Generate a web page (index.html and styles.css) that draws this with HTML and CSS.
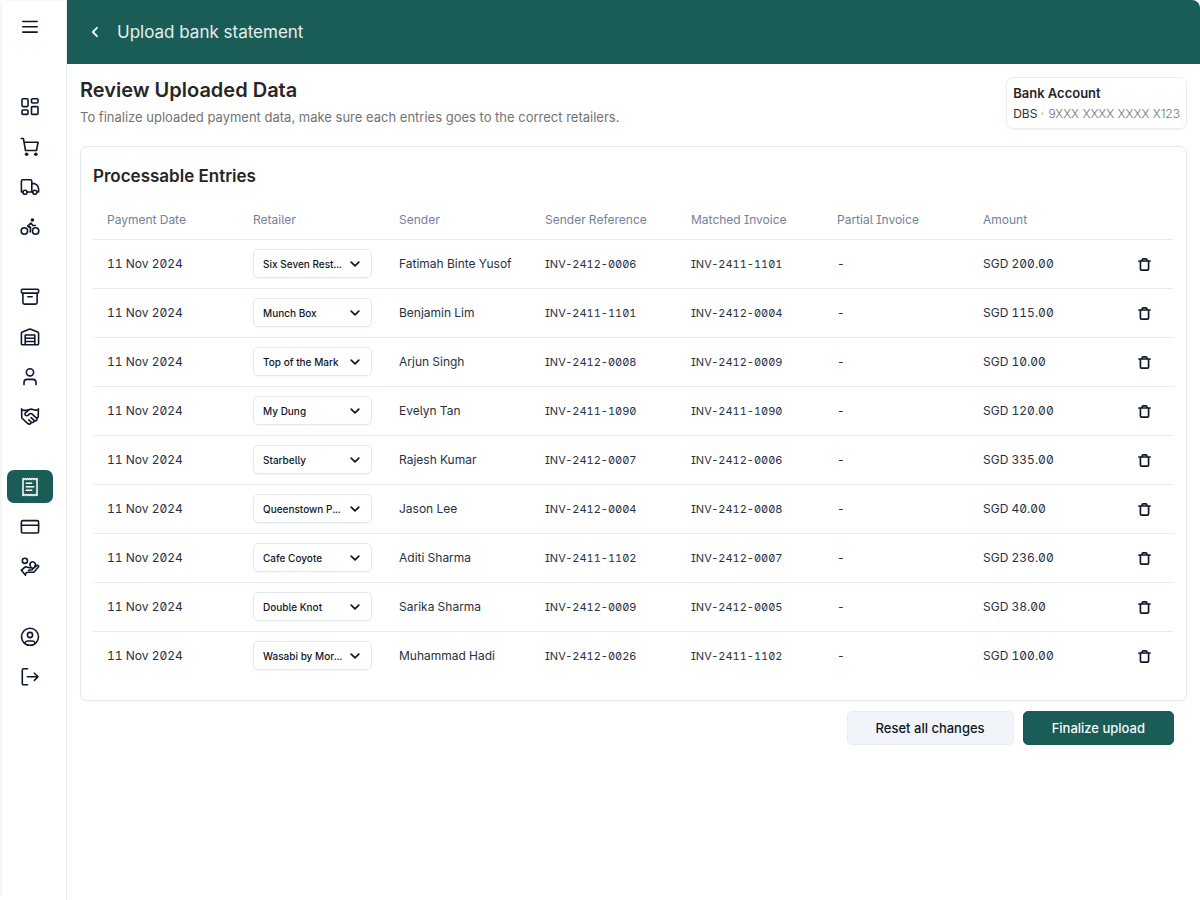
FILE: index.html
```html
<!DOCTYPE html>
<html lang="en">
<head>
<meta charset="utf-8">
<title>Upload bank statement</title>
<link rel="stylesheet" href="styles.css">
</head>
<body>
<svg class="sprite" aria-hidden="true">
  <symbol id="trash" viewBox="0 0 14 14"><path d="M1 3.2h12M4.4 3V2.2Q4.4 1 5.6 1h2.8q1.2 0 1.2 1.2V3M2.6 3.4v8.4q0 1.2 1.2 1.2h6.4q1.2 0 1.2-1.2V3.4"/></symbol>
</svg>
<div class="app">
  <nav class="sidebar" aria-label="Main">
    <button class="nav-item menu" aria-label="Menu"><svg viewBox="0 0 20 20"><path d="M2.8 4.5h14.4M2.8 9.8h14.4M2.8 15.1h14.4"/></svg></button>
    <div class="nav-group">
      <a class="nav-item" href="#" aria-label="Dashboard"><svg viewBox="0 0 20 20"><rect x="2" y="1.8" width="6" height="7.8" rx="1"/><rect x="11.5" y="1.8" width="6.5" height="4.2" rx="1"/><rect x="2" y="13" width="6" height="4.4" rx="1"/><rect x="11.5" y="9.6" width="6.5" height="7.8" rx="1"/></svg></a>
      <a class="nav-item" href="#" aria-label="Orders"><svg viewBox="0 0 20 20"><path d="M1.2 1.5h2.2l2.1 12h11l1.6-8.3H4.2"/><circle class="solid" cx="6.6" cy="17.3" r="1.8"/><circle class="solid" cx="15.8" cy="17.3" r="1.8"/></svg></a>
      <a class="nav-item" href="#" aria-label="Deliveries"><svg viewBox="0 0 20 20"><path d="M2.8 15H1.4V4.2q0-1.4 1.4-1.4h7.6q1.4 0 1.4 1.4V15H7.2M11.8 6.6h2.4q4 1.6 4.4 5.2V15h-1.4M11.8 15h1"/><circle cx="5" cy="15.2" r="2"/><circle cx="14.8" cy="15.2" r="2"/></svg></a>
      <a class="nav-item" href="#" aria-label="Riders"><svg viewBox="0 0 20 20"><circle cx="4.4" cy="14" r="3.2"/><circle cx="15.6" cy="14" r="3.2"/><circle class="solid" cx="12.4" cy="3" r="1.8"/><path d="M10.2 15l.4-3.6L7.7 9.1l3.2-3 2 2.4h2.5M7.7 9.1l2.9 1.2"/></svg></a>
    </div>
    <div class="nav-group">
      <a class="nav-item" href="#" aria-label="Inventory"><svg viewBox="0 0 20 20"><rect x="1.4" y="2.2" width="17.2" height="3.9" rx="1"/><path d="M2.9 6.2v9.3q0 1.6 1.6 1.6h11q1.6 0 1.6-1.6V6.2M7.8 9.8h4.4"/></svg></a>
      <a class="nav-item" href="#" aria-label="Warehouse"><svg viewBox="0 0 20 20"><path d="M5.2 17.8H2.8q-1.4 0-1.4-1.4V6.5Q1.4 5.4 2.4 5l6.8-2.7q.8-.3 1.6 0L17.6 5q1 .4 1 1.5v9.9q0 1.4-1.4 1.4h-2.4M5.2 17.8V8h9.6v9.8zM5.2 11.2h9.6M5.2 14.5h9.6"/></svg></a>
      <a class="nav-item" href="#" aria-label="Retailers"><svg viewBox="0 0 20 20"><circle cx="10" cy="5.3" r="3.6"/><path d="M4 17.6v-2.1q0-3.1 3.1-3.1h5.8q3.1 0 3.1 3.1v2.1"/></svg></a>
      <a class="nav-item" href="#" aria-label="Partners"><svg viewBox="0 0 20 20"><path d="M1.6 1.9l.2 9.1M18.4 1.9l-.2 8.2-1.5 1.2M1.6 2.7q3.6 1.3 6.6.1M18.4 2.7q-3 1-5.6-.2-2-.9-4 .5L5.7 5.6q-1.5 1.7-.1 2.8 1.6.9 3.1-.7l1.2-1q1-.6 2 .2l4.6 4.2q1.2 1.5-.2 2.5-1.2.7-2.4-.5.4 1.6-.8 2.3-1 .4-2-.4.2 1.8-1.4 2.1-1.2.1-2.4-1L1.8 11M11 10.6l2.9 2.6M8.8 12.8l2.3 2.2"/></svg></a>
    </div>
    <div class="nav-group">
      <a class="nav-item active" href="#" aria-label="Invoices" aria-current="page"><svg viewBox="0 0 20 20"><path d="M3 1.5l1.2 1 1.2-1 1.2 1 1.1-1 1.2 1 1.1-1 1.2 1 1.1-1 1.2 1 1.1-1 1.2 1 1.2-1v17l-1.2-1-1.2 1-1.1-1-1.2 1-1.1-1-1.2 1-1.1-1-1.2 1-1.1-1-1.2 1-1.2-1-1.2 1zM6.3 6.3h5.4M6.3 9.8h7.4M6.3 13.3h5.4"/></svg></a>
      <a class="nav-item" href="#" aria-label="Payments"><svg viewBox="0 0 20 20"><rect x="1.4" y="3.6" width="17.2" height="12.4" rx="1.5"/><path d="M1.4 8.2h17.2"/></svg></a>
      <a class="nav-item" href="#" aria-label="Collections"><svg viewBox="0 0 20 20"><circle cx="4.9" cy="3.8" r="2.6"/><path d="M10.6 9.3a2.7 2.7 0 1 1 4.3-.2M1.4 13.3l3.2-3q1.5-.9 3 0l1.9.5h2.1q1.6.3.8 1.9l-3.8.5M12.4 12l4.6-3.6q1.8-.5 1.6 1.4l-4.1 4.8q-.8.7-2 .7H7.7q-1 0-1.6.8l-1 1.6M1.2 13l4.4 5.2"/></svg></a>
    </div>
    <div class="nav-group">
      <a class="nav-item" href="#" aria-label="Account"><svg viewBox="0 0 20 20"><circle cx="10" cy="9.8" r="8.5"/><circle cx="10" cy="8" r="2.6"/><path d="M5 16.6v-.7q.4-1.9 2.4-1.9h5.2q2 0 2.4 1.9v.7"/></svg></a>
      <a class="nav-item" href="#" aria-label="Log out"><svg viewBox="0 0 20 20"><path d="M7.6 1.8H3.7q-1.4 0-1.4 1.4v13.2q0 1.4 1.4 1.4h3.9M7.4 9.8h10.4M14.4 6.2L18 9.8l-3.6 3.6"/></svg></a>
    </div>
  </nav>
  <div class="page">
    <header class="topbar">
      <a class="back" href="#" aria-label="Back"><svg viewBox="0 0 10 12"><path d="M7 1.8L2.8 6 7 10.2"/></svg></a>
      <span class="topbar-title">Upload bank statement</span>
    </header>
    <main class="content">
      <div class="intro">
        <div class="intro-text">
          <h1>Review Uploaded Data</h1>
          <p>To finalize uploaded payment data, make sure each entries goes to the correct retailers.</p>
        </div>
        <section class="account">
          <h2>Bank Account</h2>
          <p><span class="bank">DBS</span><span class="dot"></span><span class="number">9XXX XXXX XXXX X123</span></p>
        </section>
      </div>
      <section class="card">
        <h2>Processable Entries</h2>
        <table>
          <thead>
            <tr><th>Payment Date</th><th>Retailer</th><th>Sender</th><th>Sender Reference</th><th>Matched Invoice</th><th>Partial Invoice</th><th>Amount</th><th class="action"></th></tr>
          </thead>
          <tbody>
            <tr><td>11 Nov 2024</td><td><select aria-label="Retailer"><option>Six Seven Rest...</option></select></td><td>Fatimah Binte Yusof</td><td class="code">INV-2412-0006</td><td class="code">INV-2411-1101</td><td>-</td><td>SGD 200.00</td><td class="action"><button class="delete" aria-label="Delete entry"><svg><use href="#trash"/></svg></button></td></tr>
            <tr><td>11 Nov 2024</td><td><select aria-label="Retailer"><option>Munch Box</option></select></td><td>Benjamin Lim</td><td class="code">INV-2411-1101</td><td class="code">INV-2412-0004</td><td>-</td><td>SGD 115.00</td><td class="action"><button class="delete" aria-label="Delete entry"><svg><use href="#trash"/></svg></button></td></tr>
            <tr><td>11 Nov 2024</td><td><select aria-label="Retailer"><option>Top of the Mark</option></select></td><td>Arjun Singh</td><td class="code">INV-2412-0008</td><td class="code">INV-2412-0009</td><td>-</td><td>SGD 10.00</td><td class="action"><button class="delete" aria-label="Delete entry"><svg><use href="#trash"/></svg></button></td></tr>
            <tr><td>11 Nov 2024</td><td><select aria-label="Retailer"><option>My Dung</option></select></td><td>Evelyn Tan</td><td class="code">INV-2411-1090</td><td class="code">INV-2411-1090</td><td>-</td><td>SGD 120.00</td><td class="action"><button class="delete" aria-label="Delete entry"><svg><use href="#trash"/></svg></button></td></tr>
            <tr><td>11 Nov 2024</td><td><select aria-label="Retailer"><option>Starbelly</option></select></td><td>Rajesh Kumar</td><td class="code">INV-2412-0007</td><td class="code">INV-2412-0006</td><td>-</td><td>SGD 335.00</td><td class="action"><button class="delete" aria-label="Delete entry"><svg><use href="#trash"/></svg></button></td></tr>
            <tr><td>11 Nov 2024</td><td><select aria-label="Retailer"><option>Queenstown P...</option></select></td><td>Jason Lee</td><td class="code">INV-2412-0004</td><td class="code">INV-2412-0008</td><td>-</td><td>SGD 40.00</td><td class="action"><button class="delete" aria-label="Delete entry"><svg><use href="#trash"/></svg></button></td></tr>
            <tr><td>11 Nov 2024</td><td><select aria-label="Retailer"><option>Cafe Coyote</option></select></td><td>Aditi Sharma</td><td class="code">INV-2411-1102</td><td class="code">INV-2412-0007</td><td>-</td><td>SGD 236.00</td><td class="action"><button class="delete" aria-label="Delete entry"><svg><use href="#trash"/></svg></button></td></tr>
            <tr><td>11 Nov 2024</td><td><select aria-label="Retailer"><option>Double Knot</option></select></td><td>Sarika Sharma</td><td class="code">INV-2412-0009</td><td class="code">INV-2412-0005</td><td>-</td><td>SGD 38.00</td><td class="action"><button class="delete" aria-label="Delete entry"><svg><use href="#trash"/></svg></button></td></tr>
            <tr><td>11 Nov 2024</td><td><select aria-label="Retailer"><option>Wasabi by Mor...</option></select></td><td>Muhammad Hadi</td><td class="code">INV-2412-0026</td><td class="code">INV-2411-1102</td><td>-</td><td>SGD 100.00</td><td class="action"><button class="delete" aria-label="Delete entry"><svg><use href="#trash"/></svg></button></td></tr>
          </tbody>
        </table>
      </section>
      <div class="actions">
        <button class="btn btn-secondary">Reset all changes</button>
        <button class="btn btn-primary">Finalize upload</button>
      </div>
    </main>
  </div>
</div>
</body>
</html>
```
FILE: styles.css
```css
:root {
  --green: #1a5d57;
  --ink: #0f172a;
  --line: #e7ecf3;
}
* { box-sizing: border-box; }
body {
  margin: 0;
  background: #fff;
  color: var(--ink);
  font-family: Inter, "Liberation Sans", sans-serif;
  font-size: 12px;
}
h1, h2, p { margin: 0; }
button, select { font: inherit; color: inherit; cursor: pointer; }
svg { fill: none; stroke: currentColor; stroke-linecap: round; stroke-linejoin: round; }
.sprite { display: none; }
.app { display: flex; min-height: 100vh; border-radius: 8px; overflow: hidden; }

.sidebar {
  flex: none;
  width: 67px;
  padding: 10px 13px 10px 7px;
  border-right: 1px solid var(--line);
  display: flex;
  flex-direction: column;
  gap: 37px;
  box-shadow: inset 2px 1px 2px #f4f4f5;
}
.nav-group { display: flex; flex-direction: column; gap: 7px; }
.nav-item {
  display: flex;
  align-items: center;
  justify-content: center;
  height: 33px;
  padding: 0;
  border: 0;
  border-radius: 7px;
  background: none;
  color: var(--ink);
}
.menu { margin-bottom: 10px; }
.nav-item svg { width: 20px; height: 20px; stroke-width: 1.6; }
.nav-item .solid { fill: currentColor; stroke: none; }
.nav-item.active { background: var(--green); color: #fff; }
.nav-item.active svg { stroke-width: 1.5; }

.page { flex: 1; min-width: 0; }
.topbar {
  display: flex;
  align-items: center;
  gap: 17px;
  height: 64px;
  padding: 0 23px;
  background: var(--green);
  color: #e6efee;
}
.back { display: flex; color: #fff; }
.back svg { width: 10px; height: 12px; stroke-width: 1.8; }
.topbar-title { font-size: 17px; }

.content { padding: 13px 13px 24px; }
.intro { display: flex; justify-content: space-between; align-items: flex-start; margin-bottom: 17px; }
.intro-text { color: #737373; font-size: 13px; line-height: 20px; }
h1 { margin-bottom: 4px; color: #262626; font-size: 20px; line-height: 26px; font-weight: 600; }
.account {
  padding: 6px;
  border: 1px solid var(--line);
  border-radius: 7px;
  box-shadow: 0 1px 2px #0f172a0d;
  color: #737373;
}
.account h2 { margin-bottom: 3px; color: #262626; font-size: 13px; line-height: 18px; font-weight: 600; }
.account p { display: flex; align-items: center; gap: 4px; font-size: 12px; line-height: 17px; }
.bank { color: #333; }
.number { font-weight: 300; }
.dot { width: 3px; height: 3px; border-radius: 50%; background: #d9d9d9; }

.card {
  padding: 17px 12px 20px;
  border: 1px solid #e2e8f0;
  border-radius: 7px;
  box-shadow: 0 1px 2px #0f172a08;
}
.card h2 { margin-bottom: 12px; color: #262626; font-size: 17px; line-height: 24px; font-weight: 600; }
table { width: 100%; table-layout: fixed; border-collapse: collapse; }
th, td { height: 49px; padding: 0 13px 0 14px; text-align: left; border-bottom: 1px solid var(--line); font-feature-settings: "ss02", "tnum"; }
th { height: 39px; color: #748297; font-weight: 400; }
td { color: #273143; }
tbody tr:last-child td { border-bottom: 0; }
.code { font-size: 11px; }
.action { width: 59px; padding: 0; text-align: center; }
select {
  appearance: none;
  display: block;
  width: 100%;
  height: 29px;
  padding: 0 28px 0 9px;
  border: 1px solid #e2e8f0;
  border-radius: 5px;
  background: #fff url("data:image/svg+xml,%3Csvg xmlns='http://www.w3.org/2000/svg' viewBox='0 0 10 6' fill='none' stroke='%230f172a' stroke-width='1.7' stroke-linecap='round' stroke-linejoin='round'%3E%3Cpath d='M1.2 1.2L5 4.8l3.8-3.6'/%3E%3C/svg%3E") no-repeat right 11px center / 10px 6px;
  box-shadow: 0 1px 1px #0f172a08;
  color: var(--ink);
  font-size: 10px;
  font-weight: 500;
}
.delete { display: inline-flex; padding: 0; border: 0; background: none; color: var(--ink); vertical-align: middle; }
.delete svg { width: 13px; height: 13px; stroke-width: 1.8; }

.actions { display: flex; justify-content: flex-end; gap: 9px; padding: 10px 13px 0; }
.btn { height: 34px; padding: 0 28px; border: 1px solid var(--green); border-radius: 5px; font-size: 13px; font-weight: 500; }
.btn-primary { background: var(--green); color: #f5faf9; }
.btn-secondary { background: #f1f5f9; border-color: #e8edf3; }
```
